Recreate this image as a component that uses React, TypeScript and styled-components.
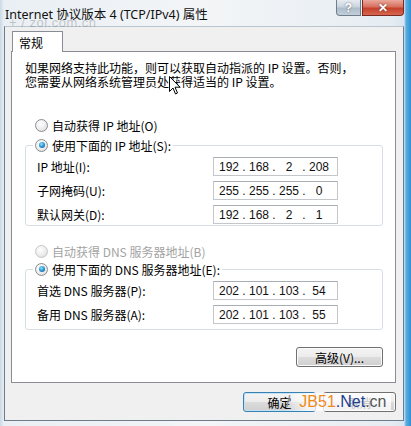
import styled, { createGlobalStyle } from 'styled-components';

const GlobalStyle = createGlobalStyle`
  html, body {
    margin: 0;
    padding: 0;
    background: #ffffff;
  }
  body {
    font-family: "Noto Sans CJK SC", "Noto Sans", sans-serif;
    font-size: 12px;
    color: #000;
  }
`;

const Window = styled.div`
  position: relative;
  box-sizing: border-box;
  width: 411px;
  height: 426px;
  display: flex;
  flex-direction: column;
  padding: 0 7px 5px 4px;
  overflow: hidden;
  background: linear-gradient(
    90deg,
    #c9d9e6 0px,
    #e9eff4 4px,
    #f3f5f7 50%,
    #e6edf2 95%,
    #d8e6f0 404px,
    #5aaee2 406px,
    #2f8fd2 411px
  );
`;

const TitleBar = styled.div`
  height: 27px;
  display: flex;
  justify-content: space-between;
  align-items: flex-start;
`;

const Title = styled.span`
  padding: 4px 0 0 1px;
  font-family: "Noto Sans", "Noto Sans CJK SC", sans-serif;
  font-size: 12.5px;
  color: #111;
`;

const Caption = styled.div`
  display: flex;
  gap: 1px;
`;

const CaptionButton = styled.div<{ $close?: boolean }>`
  box-sizing: border-box;
  width: ${(p) => (p.$close ? 42 : 25)}px;
  height: 16px;
  display: flex;
  align-items: center;
  justify-content: center;
  border: 1px solid ${(p) => (p.$close ? '#7a2a22' : '#6f7d8c')};
  border-top: none;
  border-radius: ${(p) => (p.$close ? '0 0 4px 0' : '0 0 0 4px')};
  background: ${(p) =>
    p.$close
      ? 'linear-gradient(180deg, #e9a99c 0%, #d7705e 45%, #c4412c 55%, #d8674f 100%)'
      : 'linear-gradient(180deg, #e6ecf1 0%, #c9d4de 45%, #aebdca 55%, #c3d0db 100%)'};
  color: #fff;
  font-family: "Liberation Sans", sans-serif;
  font-weight: bold;
  font-size: 12px;
  text-shadow: 0 0 2px rgba(0, 0, 0, 0.55);
`;

const Client = styled.div`
  flex: 1;
  display: flex;
  flex-direction: column;
  padding: 4px 7px 8px 6px;
  background: #f0f0f0;
  border: 1px solid #6e7c8a;
  border-top-color: #b9c5cf;
`;

const TabStrip = styled.div`
  display: flex;
  padding-left: 1px;
`;

const Tab = styled.div`
  position: relative;
  z-index: 1;
  box-sizing: border-box;
  width: 51px;
  height: 21px;
  margin-bottom: -1px;
  padding: 2px 0 0 6px;
  background: #ffffff;
  border: 1px solid #898c95;
  border-bottom: none;
`;

const Panel = styled.div`
  box-sizing: border-box;
  width: 385px;
  height: 332px;
  display: flex;
  flex-direction: column;
  padding: 9px 12px 0 13px;
  background: #ffffff;
  border: 1px solid #898c95;
`;

const Intro = styled.p`
  margin: 0;
  line-height: 14px;
`;

const RadioRow = styled.label<{ $disabled?: boolean; $gap?: number }>`
  display: flex;
  align-items: center;
  gap: 4px;
  height: 16px;
  margin-top: ${(p) => p.$gap ?? 0}px;
  margin-left: 10px;
  color: ${(p) => (p.$disabled ? '#a3a3a3' : '#000')};
`;

const RadioDot = styled.span<{ $checked?: boolean; $disabled?: boolean }>`
  box-sizing: border-box;
  width: 13px;
  height: 13px;
  display: flex;
  align-items: center;
  justify-content: center;
  border-radius: 50%;
  border: 1px solid ${(p) => (p.$disabled ? '#c8c8c8' : '#8a8d91')};
  background: radial-gradient(circle at 40% 35%, #ffffff 0%, #ececec 55%, #d2d2d2 100%);
  &::after {
    content: '';
    display: ${(p) => (p.$checked ? 'block' : 'none')};
    width: 6px;
    height: 6px;
    border-radius: 50%;
    background: radial-gradient(circle at 40% 35%, #8ee2fb 0%, #2a95d4 50%, #114a84 100%);
  }
`;

const Group = styled.fieldset<{ $top: number; $bottom: number }>`
  margin: ${(p) => p.$top}px 0 0;
  padding: 4px 0 ${(p) => p.$bottom}px 11px;
  min-width: 0;
  display: flex;
  flex-direction: column;
  gap: 5px;
  border: 1px solid #d5dfe5;
  border-radius: 3px;
`;

const Legend = styled.legend`
  margin-left: -4px;
  padding: 0 2px;
  & > label {
    margin: 0;
  }
`;

const FieldRow = styled.div`
  display: flex;
  align-items: center;
  height: 19px;
`;

const FieldLabel = styled.span`
  width: 176px;
`;

const IpBox = styled.div`
  box-sizing: border-box;
  width: 125px;
  height: 19px;
  display: flex;
  align-items: center;
  padding-left: 2px;
  background: #ffffff;
  border: 1px solid #c3c7cc;
  border-top-color: #a9aeb4;
  font-family: "Liberation Sans", Arial, sans-serif;
  font-size: 12px;
  color: #111;
`;

const Octet = styled.span`
  width: 26px;
  text-align: center;
`;

const Dot = styled.span`
  width: 4px;
  text-align: center;
`;

const ButtonRow = styled.div<{ $top: number }>`
  display: flex;
  justify-content: flex-end;
  gap: 7px;
  margin-top: ${(p) => p.$top}px;
`;

const Button = styled.div<{ $w: number; $default?: boolean }>`
  box-sizing: border-box;
  width: ${(p) => p.$w}px;
  height: 20px;
  display: flex;
  align-items: center;
  justify-content: center;
  border: 1px solid ${(p) => (p.$default ? '#3c7fb1' : '#707070')};
  border-radius: 3px;
  background: linear-gradient(180deg, #f4f4f4 0%, #ececec 48%, #dcdcdc 52%, #cfcfcf 100%);
  box-shadow: ${(p) => (p.$default ? 'inset 0 0 0 1px #bfe4f8' : 'inset 0 0 0 1px #fbfbfb')};
`;

const Watermark = styled.div`
  position: absolute;
  left: 286px;
  top: 393px;
  display: flex;
  align-items: center;
  height: 18px;
  padding-right: 4px;
  font-family: "Liberation Sans", Arial, sans-serif;
  font-size: 16px;
  background: linear-gradient(90deg, rgba(255, 255, 255, 0) 0%, rgba(255, 255, 255, 0.75) 20%);
`;

const WmPart = styled.span<{ $color: string }>`
  color: ${(p) => p.$color};
`;

const TopMark = styled.div`
  position: absolute;
  left: 9px;
  top: 15px;
  font-family: "Liberation Sans", Arial, sans-serif;
  font-size: 13px;
  letter-spacing: 0.5px;
  color: rgba(110, 110, 110, 0.35);
`;

const Cursor = styled.svg`
  position: absolute;
  left: 169px;
  top: 76px;
`;

function Radio({ label, checked, disabled }: { label: string; checked?: boolean; disabled?: boolean }) {
  return (
    <>
      <RadioDot $checked={checked} $disabled={disabled} />
      {label}
    </>
  );
}

function IpField({ value }: { value: string }) {
  const parts = value.split('.');
  return (
    <IpBox>
      {parts.map((p, i) => (
        <span key={i} style={{ display: 'contents' }}>
          {i > 0 && <Dot>.</Dot>}
          <Octet>{p}</Octet>
        </span>
      ))}
    </IpBox>
  );
}

export default function App() {
  return (
    <>
      <GlobalStyle />
      <Window>
        <TitleBar>
          <Title>Internet 协议版本 4 (TCP/IPv4) 属性</Title>
          <Caption>
            <CaptionButton>?</CaptionButton>
            <CaptionButton $close>✕</CaptionButton>
          </Caption>
        </TitleBar>
        <Client>
          <TabStrip>
            <Tab>常规</Tab>
          </TabStrip>
          <Panel>
            <Intro>
              如果网络支持此功能，则可以获取自动指派的 IP 设置。否则，
              <br />
              您需要从网络系统管理员处获得适当的 IP 设置。
            </Intro>
            <RadioRow $gap={28}>
              <Radio label="自动获得 IP 地址(O)" />
            </RadioRow>
            <Group $top={4} $bottom={1}>
              <Legend>
                <RadioRow>
                  <Radio label="使用下面的 IP 地址(S):" checked />
                </RadioRow>
              </Legend>
              <FieldRow>
                <FieldLabel>IP 地址(I):</FieldLabel>
                <IpField value="192.168.2.208" />
              </FieldRow>
              <FieldRow>
                <FieldLabel>子网掩码(U):</FieldLabel>
                <IpField value="255.255.255.0" />
              </FieldRow>
              <FieldRow>
                <FieldLabel>默认网关(D):</FieldLabel>
                <IpField value="192.168.2.1" />
              </FieldRow>
            </Group>
            <RadioRow $gap={17} $disabled>
              <Radio label="自动获得 DNS 服务器地址(B)" disabled />
            </RadioRow>
            <Group $top={2} $bottom={5}>
              <Legend>
                <RadioRow>
                  <Radio label="使用下面的 DNS 服务器地址(E):" checked />
                </RadioRow>
              </Legend>
              <FieldRow>
                <FieldLabel>首选 DNS 服务器(P):</FieldLabel>
                <IpField value="202.101.103.54" />
              </FieldRow>
              <FieldRow>
                <FieldLabel>备用 DNS 服务器(A):</FieldLabel>
                <IpField value="202.101.103.55" />
              </FieldRow>
            </Group>
            <ButtonRow $top={17}>
              <Button $w={87}>高级(V)...</Button>
            </ButtonRow>
          </Panel>
          <ButtonRow $top={9}>
            <Button $w={73} $default>
              确定
            </Button>
            <Button $w={73}>取消</Button>
          </ButtonRow>
        </Client>
        <TopMark>+ / zol.com.cn</TopMark>
        <Watermark>
          <WmPart $color="#8a8a8a">/&nbsp;&nbsp;</WmPart>
          <WmPart $color="#f08a1e">JB51</WmPart>
          <WmPart $color="#1d3f8f">.Net</WmPart>
          <WmPart $color="#555">.cn</WmPart>
        </Watermark>
        <Cursor width="12" height="19" viewBox="0 0 12 19">
          <path d="M0.5 0.5 L0.5 15.5 L4 12 L6.5 18 L8.5 17 L6 11.2 L11 11.2 Z" fill="#fff" stroke="#000" strokeWidth="1" />
        </Cursor>
      </Window>
    </>
  );
}
